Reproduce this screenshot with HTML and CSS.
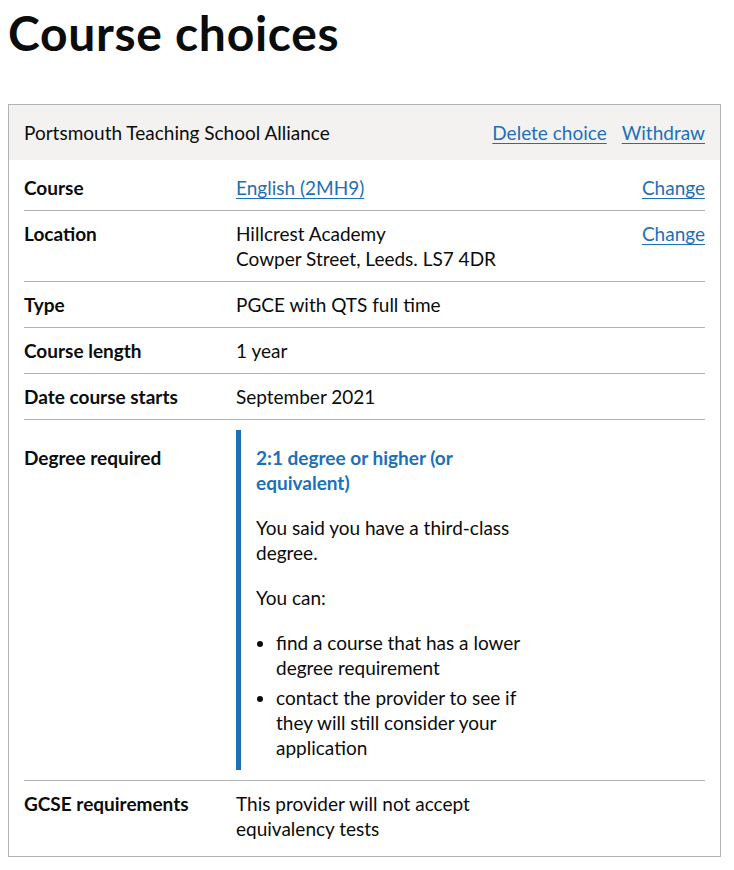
FILE: index.html
```html
<!DOCTYPE html>
<html lang="en">
<head>
<meta charset="utf-8">
<title>Course choices</title>
<link rel="stylesheet" href="styles.css">
</head>
<body>
<h1 class="heading">Course choices</h1>
<section class="card">
  <header class="card-header">
    <h2 class="card-title">Portsmouth Teaching School Alliance</h2>
    <ul class="card-actions">
      <li><a class="link" href="#">Delete choice</a></li>
      <li><a class="link" href="#">Withdraw</a></li>
    </ul>
  </header>
  <dl class="summary">
    <div class="row">
      <dt class="key">Course</dt>
      <dd class="value"><a class="link" href="#">English (2MH9)</a></dd>
      <dd class="action"><a class="link" href="#">Change</a></dd>
    </div>
    <div class="row">
      <dt class="key">Location</dt>
      <dd class="value">Hillcrest Academy<br>Cowper Street, Leeds. LS7 4DR</dd>
      <dd class="action"><a class="link" href="#">Change</a></dd>
    </div>
    <div class="row">
      <dt class="key">Type</dt>
      <dd class="value">PGCE with QTS full time</dd>
      <dd class="action"></dd>
    </div>
    <div class="row">
      <dt class="key">Course length</dt>
      <dd class="value">1 year</dd>
      <dd class="action"></dd>
    </div>
    <div class="row">
      <dt class="key">Date course starts</dt>
      <dd class="value">September 2021</dd>
      <dd class="action"></dd>
    </div>
    <div class="row">
      <dt class="key key-inset">Degree required</dt>
      <dd class="value">
        <div class="inset">
          <h3 class="inset-title">2:1 degree or higher (or equivalent)</h3>
          <p class="para">You said you have a third-class degree.</p>
          <p class="para">You can:</p>
          <ul class="bullets">
            <li>find a course that has a lower degree requirement</li>
            <li>contact the provider to see if they will still consider your application</li>
          </ul>
        </div>
      </dd>
      <dd class="action"></dd>
    </div>
    <div class="row row-last">
      <dt class="key">GCSE requirements</dt>
      <dd class="value">This provider will not accept equivalency tests</dd>
      <dd class="action"></dd>
    </div>
  </dl>
</section>
</body>
</html>
```

FILE: styles.css
```css
* { box-sizing: border-box; }

body {
  margin: 8px;
  font-family: Lato, "Liberation Sans", Arial, sans-serif;
  font-size: 19px;
  line-height: 25px;
  color: #0b0c0c;
  background: #ffffff;
}

.heading {
  margin: 0 0 46px;
  font-size: 48px;
  line-height: 50px;
  font-weight: 700;
  letter-spacing: 0.7px;
}

.card {
  width: 713px;
  border: 1px solid #b1b4b6;
}

.card-header {
  display: flex;
  justify-content: space-between;
  align-items: center;
  background: #f3f2f1;
  padding: 15px 15px;
}

.card-title {
  margin: 0;
  font-size: 19px;
  line-height: 25px;
  font-weight: 400;
}

.card-actions {
  display: flex;
  gap: 15px;
  margin: 0;
  padding: 0;
  list-style: none;
}

.link {
  color: #1d70b8;
  text-decoration: underline;
  text-decoration-thickness: 1px;
  text-underline-offset: 3px;
}

.summary {
  margin: 0;
  padding: 5px 15px 5px;
}

.row {
  display: grid;
  grid-template-columns: 212px 320px 1fr;
  border-bottom: 1px solid #b1b4b6;
}

.row-last { border-bottom: 0; }

.key, .value, .action {
  margin: 0;
  padding: 10px 0;
}

.key { font-weight: 700; }

.key-inset { padding-top: 25px; }

.value { padding-right: 20px; }

.action { text-align: right; }

.inset {
  border-left: 5px solid #1d70b8;
  padding: 15px 15px 5px;
}

.inset-title {
  margin: 0 0 20px;
  font-size: 19px;
  line-height: 25px;
  font-weight: 700;
  color: #1d70b8;
}

.para { margin: 0 0 20px; }

.bullets {
  margin: 0;
  padding-left: 20px;
}

.bullets li { margin-bottom: 5px; }
```
